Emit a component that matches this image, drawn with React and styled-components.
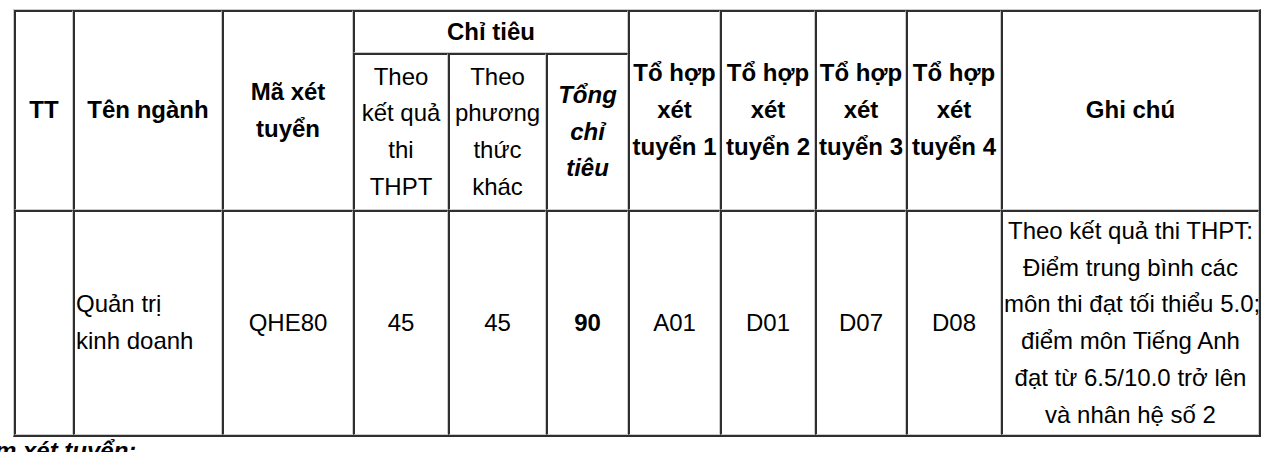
import React from "react";
import styled, { createGlobalStyle, css } from "styled-components";

const Global = createGlobalStyle`
  html, body { margin: 0; padding: 0; background: #fff; }
  body { font-family: "Liberation Sans", Arial, Helvetica, sans-serif; color: #000; overflow: hidden; }
`;

const LIGHT = "#cbcbcb";
const DARK = "#2f2f2f";

const Page = styled.div`
  width: 1273px;
  height: 452px;
  overflow: hidden;
`;

const TableWrap = styled.div`
  padding: 9px 0 0 13px;
`;

const Table = styled.table`
  width: 1248px;
  table-layout: fixed;
  border-collapse: separate;
  border-spacing: 0;
  border-style: solid;
  border-color: ${LIGHT} ${DARK} ${DARK} ${LIGHT};
  border-width: 1px 2px 2px 1px;
  font-size: 24px;
  line-height: 36.7px;
`;

const Row = styled.tr`
  height: ${(p) => p.$h}px;
`;

const cellBase = css`
  box-sizing: border-box;
  border-style: solid;
  border-color: ${DARK} ${LIGHT} ${LIGHT} ${DARK};
  border-width: 2px 1px 1px 2px;
  padding: 1px;
  vertical-align: middle;
  text-align: center;
  white-space: nowrap;
  overflow: visible;
`;

const HeadCell = styled.th`
  ${cellBase};
  font-weight: 700;
`;

const SubHead = styled.th`
  ${cellBase};
  font-weight: ${(p) => (p.$total ? 700 : 400)};
  font-style: ${(p) => (p.$total ? "italic" : "normal")};
`;

const Cell = styled.td`
  ${cellBase};
  text-align: ${(p) => (p.$left ? "left" : "center")};
  font-weight: ${(p) => (p.$bold ? 700 : 400)};
`;

const Note = styled.p`
  margin: 0 0 0 -5px;
  font-size: 24px;
  line-height: normal;
  font-weight: 700;
  font-style: italic;
  white-space: nowrap;
`;

const widths = [59, 149, 131, 95, 98, 82, 92, 95, 91, 95, 258];

const lines = (arr) =>
  arr.map((t, i) => (
    <React.Fragment key={i}>
      {i > 0 && <br />}
      {t}
    </React.Fragment>
  ));

export default function App() {
  return (
    <Page>
      <Global />
      <TableWrap>
        <Table>
          <colgroup>
            {widths.map((w, i) => (
              <col key={i} style={{ width: w }} />
            ))}
          </colgroup>
          <thead>
            <Row $h={43}>
              <HeadCell rowSpan={2}>TT</HeadCell>
              <HeadCell rowSpan={2}>Tên ngành</HeadCell>
              <HeadCell rowSpan={2}>{lines(["Mã xét", "tuyển"])}</HeadCell>
              <HeadCell colSpan={3}>Chỉ tiêu</HeadCell>
              <HeadCell rowSpan={2}>{lines(["Tổ hợp", "xét", "tuyển 1"])}</HeadCell>
              <HeadCell rowSpan={2}>{lines(["Tổ hợp", "xét", "tuyển 2"])}</HeadCell>
              <HeadCell rowSpan={2}>{lines(["Tổ hợp", "xét", "tuyển 3"])}</HeadCell>
              <HeadCell rowSpan={2}>{lines(["Tổ hợp", "xét", "tuyển 4"])}</HeadCell>
              <HeadCell rowSpan={2}>Ghi chú</HeadCell>
            </Row>
            <Row $h={157}>
              <SubHead>{lines(["Theo", "kết quả", "thi", "THPT"])}</SubHead>
              <SubHead>{lines(["Theo", "phương", "thức", "khác"])}</SubHead>
              <SubHead $total>{lines(["Tổng", "chỉ", "tiêu"])}</SubHead>
            </Row>
          </thead>
          <tbody>
            <Row $h={224}>
              <Cell />
              <Cell $left>{lines(["Quản trị", "kinh doanh"])}</Cell>
              <Cell>QHE80</Cell>
              <Cell>45</Cell>
              <Cell>45</Cell>
              <Cell $bold>90</Cell>
              <Cell>A01</Cell>
              <Cell>D01</Cell>
              <Cell>D07</Cell>
              <Cell>D08</Cell>
              <Cell>
                {lines([
                  "Theo kết quả thi THPT:",
                  "Điểm trung bình các",
                  "môn thi đạt tối thiểu 5.0;",
                  "điểm môn Tiếng Anh",
                  "đạt từ 6.5/10.0 trở lên",
                  "và nhân hệ số 2",
                ])}
              </Cell>
            </Row>
          </tbody>
        </Table>
      </TableWrap>
      <Note>m xét tuyển:</Note>
    </Page>
  );
}
